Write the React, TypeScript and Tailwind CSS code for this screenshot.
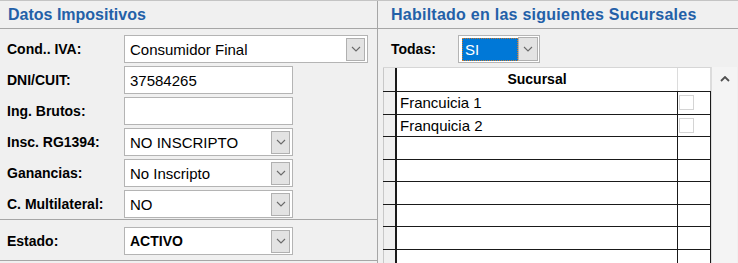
const Chevron = ({ up = false }: { up?: boolean }) => (
  <svg width="10" height="6" viewBox="0 0 10 6">
    <path
      d={up ? "M1 5l4-4 4 4" : "M1 1l4 4 4-4"}
      fill="none"
      stroke={up ? "#505050" : "#6a6a6a"}
      strokeWidth={up ? 1.8 : 1.1}
    />
  </svg>
)

type ComboProps = { value: string; wide?: boolean; bold?: boolean }

const Combo = ({ value, wide, bold }: ComboProps) => (
  <div
    className={`flex h-[28px] items-center border border-[#b4b4b4] bg-white ${
      wide ? "w-[244px]" : "w-[169px]"
    }`}
  >
    <span className={`flex-1 pl-[5px] leading-none ${bold ? "text-[14px] font-bold" : "text-[15px]"}`}>
      {value}
    </span>
    <div className="mr-[2px] flex h-[23px] w-[19px] items-center justify-center border border-[#b0b0b0] bg-[#e3e3e3]">
      <Chevron />
    </div>
  </div>
)

const TextBox = ({ value }: { value: string }) => (
  <div className="flex h-[28px] w-[169px] items-center border border-[#b4b4b4] bg-white pl-[5px] text-[15px] leading-none">
    {value}
  </div>
)

const Row = ({ label, children }: { label: string; children: React.ReactNode }) => (
  <div className="flex h-[28px] items-center">
    <span className="w-[117px] text-[14px] font-bold leading-none">{label}</span>
    {children}
  </div>
)

const sucursales = ["Francuicia 1", "Franquicia 2", "", "", "", "", "", "", ""]

const App = () => {
  return (
    <div className="flex h-[263px] w-[738px] overflow-hidden border-t border-[#c4c4c4] bg-[#f0f0f0] font-['Liberation_Sans',Arial,sans-serif] text-black">
      {/* Datos impositivos */}
      <div className="flex w-[378px] shrink-0 flex-col border-r border-[#a6a6a6]">
        <div className="flex h-[28px] items-center border-b border-[#a6a6a6] pl-[8px] text-[16px] font-bold text-[#2360a8]">
          Datos Impositivos
        </div>
        <div className="flex flex-col gap-[3px] border-b border-[#a6a6a6] pb-[1px] pl-[7px] pt-[6px]">
          <Row label="Cond.. IVA:">
            <Combo value="Consumidor Final" wide />
          </Row>
          <Row label="DNI/CUIT:">
            <TextBox value="37584265" />
          </Row>
          <Row label="Ing. Brutos:">
            <TextBox value="" />
          </Row>
          <Row label="Insc. RG1394:">
            <Combo value="NO INSCRIPTO" />
          </Row>
          <Row label="Ganancias:">
            <Combo value="No Inscripto" />
          </Row>
          <Row label="C. Multilateral:">
            <Combo value="NO" />
          </Row>
        </div>
        <div className="border-b border-[#a6a6a6] pb-[5px] pl-[7px] pt-[7px]">
          <Row label="Estado:">
            <Combo value="ACTIVO" bold />
          </Row>
        </div>
      </div>

      {/* Sucursales */}
      <div className="flex flex-1 flex-col">
        <div className="flex h-[28px] shrink-0 items-center border-b border-[#a6a6a6] pl-[13px] text-[16px] font-bold tracking-[0.25px] text-[#2360a8]">
          Habiltado en las siguientes Sucursales
        </div>
        <div className="mt-[6px] flex h-[28px] shrink-0 items-center pl-[13px]">
          <span className="w-[67px] text-[14px] font-bold leading-none">Todas:</span>
          <div className="flex h-[28px] w-[82px] items-center border border-[#b4b4b4] bg-white">
            <div className="ml-[3px] flex h-[23px] w-[56px] items-center border border-dotted border-[#c77a2f] bg-[#0078d7] pl-[2px] text-[15px] leading-none text-white">
              SI
            </div>
            <div className="ml-auto mr-[1px] flex h-[24px] w-[20px] items-center justify-center border border-[#b0b0b0] bg-[#e3e3e3]">
              <Chevron />
            </div>
          </div>
        </div>
        <div className="ml-[5px] mt-[4px] flex">
          <div className="flex w-[328px] flex-col">
            <div className="flex h-[25px] border-b border-t border-[#1a1a1a] border-t-[#d6d6d6]">
              <div className="w-[14px] border-l border-r-2 border-l-[#c8c8c8] border-r-[#1a1a1a] bg-[#f0f0f0]" />
              <div className="flex w-[281px] items-center justify-center border-r border-[#dcdcdc] bg-white text-[14px] font-bold">
                Sucursal
              </div>
              <div className="w-[33px] border-r border-[#dcdcdc] bg-white" />
            </div>
            {sucursales.map((s, i) => (
              <div key={i} className="flex h-[22.5px] shrink-0 border-b border-[#1a1a1a]">
                <div className="w-[14px] border-l border-r-2 border-l-[#c8c8c8] border-r-[#1a1a1a] bg-[#f0f0f0]" />
                <div className="flex w-[281px] items-center border-r border-[#1a1a1a] bg-white pl-[3px] text-[15px] leading-none">
                  {s}
                </div>
                <div className="w-[33px] border-r border-[#1a1a1a] bg-white pl-[1px] pt-[3px]">
                  {s && <div className="h-[15px] w-[15px] border border-[#d4d4d4] bg-white" />}
                </div>
              </div>
            ))}
          </div>
          <div className="flex w-[26px] flex-col items-center border-l border-[#dcdcdc] bg-[#f4f4f4] pt-[9px]">
            <Chevron up />
          </div>
        </div>
      </div>
    </div>
  )
}

export default App
